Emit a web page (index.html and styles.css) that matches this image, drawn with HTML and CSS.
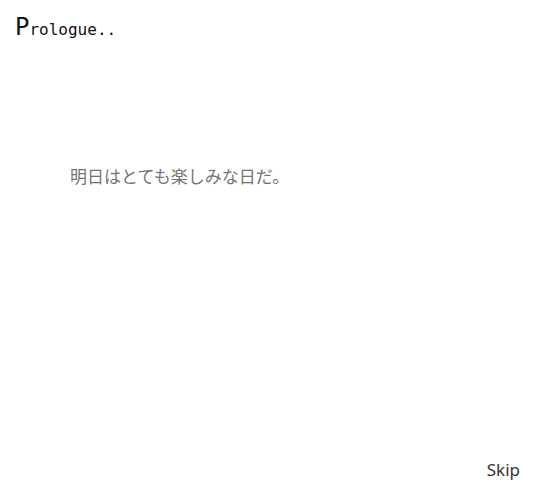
FILE: index.html
```html
<!DOCTYPE html>
<html lang="ja">
<head>
<meta charset="utf-8">
<link rel="stylesheet" href="styles.css">
</head>
<body>
<div class="screen">
  <h1 class="title"><span class="cap">P</span>rologue..</h1>
  <p class="line">明日はとても楽しみな日だ。</p>
  <div class="footer"><span class="skip">Skip</span></div>
</div>
</body>
</html>
```
FILE: styles.css
```css
html, body { margin: 0; padding: 0; background: #fff; }
.screen {
  width: 550px; height: 500px;
  display: flex; flex-direction: column;
  box-sizing: border-box;
  padding: 14px 30px 18px 15px;
}
.title {
  margin: 0;
  font-family: "DejaVu Sans Mono", monospace;
  font-weight: normal;
  font-size: 16px;
  color: #111;
  line-height: 26px;
}
.cap { font-size: 24px; }
.line {
  margin: 121px 0 0 55px;
  font-family: "Noto Sans CJK JP", sans-serif;
  font-size: 17px;
  color: #747474;
  line-height: 24px;
}
.footer { margin-top: auto; display: flex; justify-content: flex-end; }
.skip {
  font-family: "Noto Sans", "Open Sans", sans-serif;
  font-size: 17px;
  color: #333;
  line-height: 24px;
}
```
